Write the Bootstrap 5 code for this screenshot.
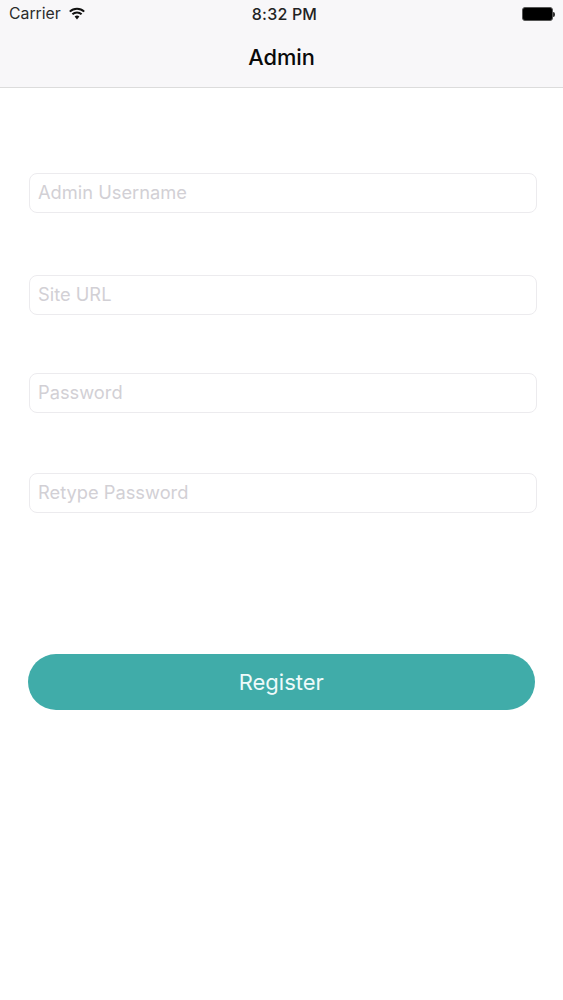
<!DOCTYPE html>
<html lang="en">
<head>
<meta charset="utf-8">
<title>Admin</title>
<link rel="stylesheet" href="https://cdn.jsdelivr.net/npm/bootstrap@5.3.0/dist/css/bootstrap.min.css">
<style>
html, body { height: 1000px; overflow: hidden; }
body { font-family: Inter, "Liberation Sans", sans-serif; background: #fff; }
.app-head { background: #f8f7f9; height: 88px; border-bottom: 1px solid #dcdcdc; }
.status-row { height: 28px; padding: 0 8px 0 9px; font-size: 15.8px; color: #2b2b2b; }
.status-side { flex: 1 1 0; }
.status-clock { font-size: 16px; font-weight: 500; color: #222; letter-spacing: .2px; margin-left: 5px; }
.batt-body { width: 31px; height: 14px; background: #000; border: 1px solid #555; border-radius: 3px; }
.batt-tip { width: 2px; height: 5px; background: #333; border-radius: 0 2px 2px 0; }
.wifi-mark { position: relative; top: -1px; }
.app-title { font-size: 21.8px; font-weight: 550; color: #0a0a0a; line-height: 59px; height: 59px; }
.form-zone { padding: 85px 26px 0 29px; }
.field-a { height: 40px; font-size: 18.3px; color: #333; border: 1px solid #ecebee; border-radius: 8px; padding: 0 8px 2px; background: #fff; }
.field-a::placeholder { color: #d2d0d5; opacity: 1; }
.gap-one { margin-top: 62px; }
.gap-two { margin-top: 58px; }
.gap-three { margin-top: 60px; }
.reg-wrap { margin-top: 141px; margin-left: -1.5px; margin-right: 2px; }
.reg-btn { height: 56px; width: 100%; background: #40aca9; border: 0; border-radius: 28px; color: #eefafa; font-size: 22px; font-weight: 400; }
.reg-btn:hover, .reg-btn:focus { background: #40aca9; color: #eefafa; }
</style>
</head>
<body>
<header class="app-head">
  <div class="status-row d-flex align-items-center">
    <div class="status-side d-flex align-items-center gap-2">
      <span>Carrier</span>
      <svg class="wifi-mark" width="16" height="13" viewBox="0 0 16 13" aria-hidden="true">
        <path d="M0.8 4.6 A10.4 10.4 0 0 1 15.2 4.6" fill="none" stroke="#111" stroke-width="2"/>
        <path d="M3.4 7.3 A6.6 6.6 0 0 1 12.6 7.3" fill="none" stroke="#111" stroke-width="2"/>
        <path d="M5.6 9.6 A3.4 3.4 0 0 1 10.4 9.6 L8 12.4 Z" fill="#111"/>
      </svg>
    </div>
    <span class="status-clock">8:32 PM</span>
    <div class="status-side d-flex align-items-center justify-content-end">
      <div class="batt-body"></div>
      <div class="batt-tip"></div>
    </div>
  </div>
  <div class="app-title text-center">Admin</div>
</header>
<main class="form-zone">
  <form>
    <input class="form-control field-a" type="text" placeholder="Admin Username">
    <input class="form-control field-a gap-one" type="text" placeholder="Site URL">
    <input class="form-control field-a gap-two" type="password" placeholder="Password">
    <input class="form-control field-a gap-three" type="password" placeholder="Retype Password">
    <div class="reg-wrap">
      <button type="button" class="btn reg-btn">Register</button>
    </div>
  </form>
</main>
<script src="https://cdn.jsdelivr.net/npm/bootstrap@5.3.0/dist/js/bootstrap.bundle.min.js"></script>
</body>
</html>
